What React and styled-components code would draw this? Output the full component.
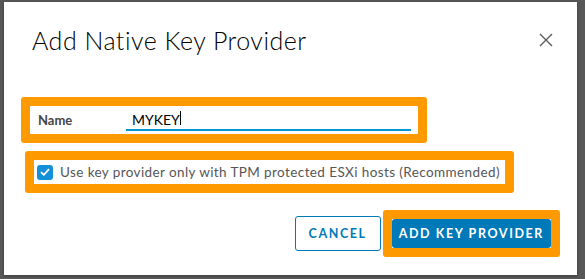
import React, { useState } from "react";
import styled, { createGlobalStyle } from "styled-components";

const GlobalStyle = createGlobalStyle`
  html, body {
    margin: 0;
    padding: 0;
    background: #585858;
  }
  body {
    font-family: 'Lato', 'Open Sans', sans-serif;
    -webkit-font-smoothing: antialiased;
  }
`;

const Backdrop = styled.div`
  width: 585px;
  height: 279px;
  box-sizing: border-box;
  padding: 2px 8px 4px 4px;
  background: #585858;
  overflow: hidden;
`;

const Modal = styled.div`
  width: 573px;
  height: 273px;
  box-sizing: border-box;
  background: #fff;
  box-shadow: 0 1px 3px rgba(0, 0, 0, 0.35);
  display: flex;
  flex-direction: column;
`;

const Header = styled.div`
  display: flex;
  justify-content: space-between;
  align-items: center;
  padding: 21px 23px 0 28px;
  height: 34px;
`;

const Title = styled.h3`
  margin: 0;
  font-family: 'Lato', sans-serif;
  font-size: 25px;
  font-weight: 300;
  color: #000;
  letter-spacing: 0.5px;
`;

const CloseButton = styled.button`
  border: 0;
  background: none;
  padding: 0;
  width: 16px;
  height: 16px;
  display: flex;
  align-items: center;
  justify-content: center;
  cursor: pointer;
`;

const Highlight = styled.div`
  box-sizing: border-box;
  width: ${(p) => p.$w}px;
  height: ${(p) => p.$h}px;
  margin: ${(p) => p.$top}px 0 0 ${(p) => p.$left}px;
  border: 9px solid #ff9900;
  border-radius: 3px;
  display: flex;
  align-items: center;
  background: #fff;
`;

const NameRow = styled.div`
  display: flex;
  align-items: center;
  width: 100%;
  padding-left: 8px;
`;

const Label = styled.label`
  width: 88px;
  font-size: 13px;
  font-weight: 700;
  color: #454545;
`;

const InputWrap = styled.div`
  position: relative;
  display: flex;
`;

const NameInput = styled.input`
  width: 285px;
  height: 22px;
  box-sizing: border-box;
  border: 0;
  border-bottom: 2px solid #0095d3;
  padding: 0 6px;
  font-family: 'Lato', sans-serif;
  font-size: 14px;
  color: #000;
  outline: none;
`;

// text cursor drawn over the field, as in the screenshot
const Caret = styled.span`
  position: absolute;
  left: 54px;
  top: 2px;
  width: 1px;
  height: 14px;
  background: #000;
  pointer-events: none;
`;

const CheckRow = styled.label`
  display: flex;
  align-items: center;
  gap: 7px;
  padding-left: 3px;
  font-size: 13.5px;
  letter-spacing: 0.4px;
  color: #565656;
  white-space: nowrap;
`;

const CheckBox = styled.span`
  width: 16px;
  height: 15px;
  border-radius: 3px;
  background: #1590d6;
  display: flex;
  align-items: center;
  justify-content: center;
`;

const Footer = styled.div`
  display: flex;
  justify-content: flex-end;
  align-items: center;
  margin-top: 17px;
  padding-right: 17px;
  gap: 2px;
`;

const Button = styled.button`
  box-sizing: border-box;
  height: ${(p) => (p.$primary ? 29 : 35)}px;
  padding: 0 ${(p) => (p.$primary ? 7 : 13)}px;
  border: ${(p) => (p.$primary ? 0 : "1px solid #0079b8")};
  border-radius: 3px;
  background: ${(p) => (p.$primary ? "#0079b8" : "#fff")};
  color: ${(p) => (p.$primary ? "#fff" : "#0079b8")};
  font-family: 'Lato', sans-serif;
  font-size: 12.5px;
  font-weight: 700;
  letter-spacing: 1.6px;
  cursor: pointer;
`;

const PrimaryFrame = styled.div`
  border: 9px solid #ff9900;
  border-radius: 3px;
  display: flex;
`;

const App = () => {
  const [name, setName] = useState("MYKEY");

  return (
    <>
      <GlobalStyle />
      <Backdrop>
        <Modal>
          <Header>
            <Title>Add Native Key Provider</Title>
            <CloseButton aria-label="Close">
              <svg width="14" height="14" viewBox="0 0 14 14">
                <path d="M1 1L13 13M13 1L1 13" stroke="#5c5c5c" strokeWidth="1.4" />
              </svg>
            </CloseButton>
          </Header>
          <Highlight $w={406} $h={46} $top={40} $left={17}>
            <NameRow>
              <Label>Name</Label>
              <InputWrap>
                <NameInput value={name} onChange={(e) => setName(e.target.value)} />
                <Caret />
              </InputWrap>
            </NameRow>
          </Highlight>
          <Highlight $w={489} $h={42} $top={8} $left={21}>
            <CheckRow>
              <CheckBox>
                <svg width="10" height="8" viewBox="0 0 10 8">
                  <path d="M1 4.2L3.8 6.8L9 1.2" stroke="#fff" strokeWidth="1.8" fill="none" />
                </svg>
              </CheckBox>
              Use key provider only with TPM protected ESXi hosts (Recommended)
            </CheckRow>
          </Highlight>
          <Footer>
            <Button>CANCEL</Button>
            <PrimaryFrame>
              <Button $primary>ADD KEY PROVIDER</Button>
            </PrimaryFrame>
          </Footer>
        </Modal>
      </Backdrop>
    </>
  );
};

export default App;
